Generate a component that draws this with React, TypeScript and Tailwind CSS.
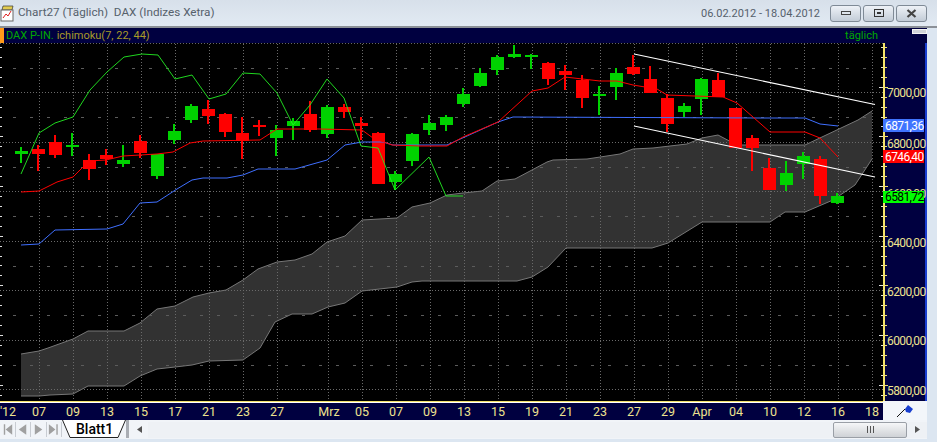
// DAX daily chart window (Ichimoku) as it looks in the charting app

type Candle = [number, number, number, number, number, 'g' | 'r'];

const candles: Candle[] = [
  [21, 147, 151, 154, 163, 'g'], [38, 145, 149, 154, 171, 'r'], [55, 135, 142, 155, 158, 'r'],
  [72, 133, 145, 147, 156, 'g'], [89, 154, 160, 169, 180, 'r'], [106, 149, 155, 159, 165, 'r'],
  [123, 145, 160, 164, 167, 'g'], [140, 135, 141, 153, 158, 'r'], [157, 154, 154, 176, 179, 'g'],
  [174, 124, 131, 140, 144, 'g'], [191, 104, 106, 120, 123, 'g'], [208, 100, 109, 116, 124, 'r'],
  [225, 113, 114, 132, 137, 'r'], [242, 117, 133, 141, 159, 'r'], [259, 120, 125, 127, 136, 'r'],
  [276, 125, 130, 138, 156, 'g'], [293, 118, 121, 126, 140, 'g'], [310, 101, 114, 130, 132, 'r'],
  [327, 105, 107, 134, 138, 'g'], [344, 104, 107, 112, 118, 'r'], [361, 117, 123, 126, 140, 'r'],
  [378, 132, 133, 184, 184, 'r'], [395, 171, 174, 182, 190, 'g'], [412, 133, 134, 161, 166, 'g'],
  [429, 115, 123, 130, 135, 'g'], [446, 115, 117, 125, 131, 'g'], [463, 88, 94, 104, 107, 'g'],
  [480, 68, 73, 86, 87, 'g'], [497, 55, 57, 70, 75, 'g'], [514, 45, 54, 57, 58, 'g'],
  [531, 54, 55, 57, 69, 'g'], [548, 62, 63, 79, 85, 'r'], [565, 65, 71, 75, 90, 'r'],
  [582, 75, 80, 98, 108, 'r'], [599, 86, 94, 96, 115, 'g'], [616, 68, 73, 87, 100, 'g'],
  [633, 55, 67, 74, 75, 'r'], [650, 66, 79, 93, 93, 'r'], [667, 94, 98, 124, 132, 'r'],
  [684, 103, 106, 112, 117, 'g'], [701, 78, 79, 99, 115, 'g'], [718, 73, 80, 97, 97, 'r'],
  [735, 108, 108, 148, 148, 'r'], [752, 135, 138, 148, 171, 'r'], [769, 158, 168, 190, 190, 'r'],
  [786, 161, 173, 185, 191, 'g'], [803, 152, 156, 164, 179, 'g'], [820, 156, 159, 196, 204, 'r'],
  [837, 193, 196, 203, 204, 'g'],
];

const greenLine = '21,174 39,133 55,123 73,117 90,90 107,72 124,57 142,54 158,55 175,79 192,75 209,99 226,94 243,73 260,74 277,93 293,125 310,105 327,79 344,98 361,146 378,148 395,190 429,157 446,196 463,196';
const redLine = '21,192 39,191 57,182 73,177 89,161 106,160 123,156 157,154 173,152 190,143 203,141 260,140 277,129 320,129 362,130 373,138 392,145 420,146 447,146 463,137 498,122 532,91 548,88 565,77 600,81 617,81 633,85 657,89 667,95 723,97 737,103 770,132 805,132 820,138 838,157';
const blueLine = '21,245 39,244 55,230 107,229 123,224 140,203 157,202 177,189 192,180 203,178 227,178 243,175 258,169 295,169 320,162 327,160 345,145 362,142 383,142 393,145 447,145 498,122 513,117 761,118 805,118 820,124 838,126';

const cloudTop = '21,354 39,351 48,348 73,339 88,331 124,331 140,323 157,309 175,306 193,297 209,293 226,290 243,280 258,269 277,262 295,260 312,254 327,242 345,236 362,220 397,218 412,207 430,203 447,195 463,193 482,191 497,181 515,179 547,162 553,160 587,159 620,154 633,149 653,148 687,144 702,138 718,135 737,145 805,145 858,120 872,111';
const cloudBottom = '21,396 39,396 50,395 73,394 88,386 124,386 140,376 157,369 175,367 192,365 209,361 243,360 260,348 275,322 292,314 312,314 328,307 345,303 362,291 397,287 412,282 422,281 517,281 532,277 548,267 566,248 652,248 668,243 702,222 770,222 785,212 805,212 833,200 855,185 872,159';
const cloudPoly = cloudTop + ' ' + cloudBottom.split(' ').reverse().join(' ');

const gridX = [39, 73, 107, 141, 175, 209, 243, 277, 328, 362, 396, 430, 464, 498, 532, 566, 600, 634, 668, 702, 736, 770, 804, 838, 872];
const gridY = [92, 142, 191, 241, 290, 340, 389];
const midY = [68, 117, 167, 216, 266, 315, 365];
const priceLabels: [string, number][] = [['7000,00', 92], ['6800,00', 143], ['6600,00', 193], ['6400,00', 242], ['6200,00', 291], ['6000,00', 340], ['5800,00', 390]];
const xLabels: [string, number][] = [["'12", 8], ['07', 39], ['09', 73], ['13', 107], ['15', 141], ['17', 175], ['21', 209], ['23', 243], ['27', 277], ['Mrz', 329], ['05', 362], ['07', 396], ['09', 430], ['13', 464], ['15', 498], ['19', 532], ['21', 566], ['23', 600], ['27', 634], ['29', 668], ['Apr', 702], ['04', 736], ['10', 770], ['12', 804], ['16', 838], ['18', 872]];

const ticks = Array.from({ length: 36 }, (_, i) => i);

function PriceBadge({ y, h, fill, color, label }: { y: number; h: number; fill: string; color: string; label: string }) {
  return (
    <g>
      <rect x={883} y={y} width={41} height={h} fill={fill} />
      <text x={885} y={y + h - 2} fontSize={12} letterSpacing={-0.6} fill={color}>{label}</text>
    </g>
  );
}

function Chart() {
  return (
    <svg viewBox="0 43 927 358" width={927} height={358} className="block bg-black font-['Roboto',sans-serif]">
      <polygon points={cloudPoly} fill="#323232" />
      <polyline points={cloudTop} fill="none" stroke="#777" />
      <polyline points={cloudBottom} fill="none" stroke="#777" />

      <line x1={0} x2={883} y1={43.5} y2={43.5} stroke="#666" strokeDasharray="1 2" />
      {gridX.map((x) => (
        <line key={x} x1={x + 0.5} x2={x + 0.5} y1={44} y2={400} stroke="#6a6a6a" strokeDasharray="1 2" />
      ))}
      {gridY.map((y) => (
        <line key={y} x1={0} x2={883} y1={y + 0.5} y2={y + 0.5} stroke="#6a6a6a" strokeDasharray="1 2" />
      ))}
      {midY.map((y) => (
        <line key={y} x1={13} x2={875} y1={y + 0.5} y2={y + 0.5} stroke="#5c5c5c" strokeDasharray="3 14" />
      ))}
      {ticks.map((i) => {
        const y = Math.round(47 + i * 9.93);
        const major = (i + 1) % 5 === 0;
        return (
          <g key={i}>
            <rect x={0} y={y} width={major ? 3 : 2} height={1} fill="#ddd" />
            <rect x={major ? 879 : 881} y={y} width={major ? 4 : 2} height={1} fill="#ddd" />
          </g>
        );
      })}

      {candles.map(([c, hi, top, bot, lo, col]) => {
        const fill = col === 'g' ? '#00d200' : '#ff0000';
        return (
          <g key={c} fill={fill} shapeRendering="crispEdges">
            <rect x={c - 1} y={hi} width={2} height={lo - hi} />
            <rect x={c - 6} y={top} width={13} height={Math.max(bot - top, 2)} />
          </g>
        );
      })}

      <polyline points={blueLine} fill="none" stroke="#3f6fff" />
      <polyline points={redLine} fill="none" stroke="#ff0000" />
      <polyline points={greenLine} fill="none" stroke="#22ee22" strokeWidth={0.9} />
      <line x1={634} y1={54} x2={875} y2={104.5} stroke="#fff" strokeWidth={1.2} />
      <line x1={634} y1={126} x2={875} y2={177} stroke="#fff" strokeWidth={1.2} />

      <rect x={883} y={43} width={44} height={358} fill="#000040" />
      <rect x={883} y={43} width={2} height={358} fill="#f4e36a" />
      <rect x={925} y={43} width={2} height={358} fill="#1a3fd0" />
      {ticks.map((i) => {
        const y = Math.round(47 + i * 9.93);
        return <rect key={i} x={885} y={y} width={(i + 1) % 5 === 0 ? 3 : 2} height={1} fill="#f4e36a" />;
      })}
      {priceLabels.map(([label, y]) => (
        <text key={label} x={887} y={y + 5} fontSize={12} letterSpacing={-0.6} fill="#eee38f">{label}</text>
      ))}
      <PriceBadge y={119} h={13} fill="#3f74ff" color="#fff" label="6871,36" />
      <PriceBadge y={150} h={13} fill="#ff0000" color="#fff" label="6746,40" />
      <PriceBadge y={191} h={12} fill="#00ff00" color="#000" label="6581,72" />
    </svg>
  );
}

function XAxis() {
  return (
    <svg viewBox="0 401 883 19" width={883} height={19} className="block bg-[#000040] font-['Roboto',sans-serif]">
      <rect x={0} y={400} width={883} height={2} fill="#f4e36a" />
      <rect x={0} y={402} width={883} height={1} fill="#fff" />
      {xLabels.map(([label, x], i) => (
        <text key={i} x={x} y={416} fontSize={12.5} fill="#eee38f" textAnchor="middle">{label}</text>
      ))}
    </svg>
  );
}

function WinButton({ children }: { children: React.ReactNode }) {
  return (
    <div className="w-[31px] h-[17px] rounded-[3px] border border-[#7f8a96] bg-gradient-to-b from-[#eef2f7] to-[#c3ccd7] flex items-center justify-center">
      {children}
    </div>
  );
}

function NavArrow({ d }: { d: string }) {
  return (
    <svg width={15} height={15} viewBox="0 0 15 15" className="block border-r border-[#c8ccd2]">
      <path d={d} fill="#a0a0a0" />
    </svg>
  );
}

export default function App() {
  return (
    <div className="w-[937px] h-[442px] overflow-hidden bg-[#dce6f1] font-['Roboto',sans-serif]">
      {/* title bar */}
      <div className="h-[28px] flex items-center pr-[10px] bg-gradient-to-b from-[#d7e0ea] to-[#e2eaf3] border-b-2 border-[#8b9097]">
        <svg width={16} height={17} viewBox="0 0 16 17" className="shrink-0">
          <path d="M3 1h10l-1 4H2z" fill="#e2cc50" stroke="#333" strokeWidth={0.7} />
          <rect x={1} y={5} width={12} height={11} fill="#fff" stroke="#666" />
          <path d="M3 13l3-4 2 2 3-5" fill="none" stroke="#e02020" />
        </svg>
        <span className="ml-[2px] text-[11.7px] leading-none text-[#56616c] whitespace-pre">Chart27 (Täglich)  DAX (Indizes Xetra)</span>
        <span className="ml-auto mr-[10px] text-[11px] leading-none text-[#56616c]">06.02.2012 - 18.04.2012</span>
        <div className="flex gap-[2px]">
          <WinButton>
            <div className="w-[10px] h-[4px] bg-[#dfe5ec] border border-[#444]" />
          </WinButton>
          <WinButton>
            <div className="w-[10px] h-[8px] border border-[#333] flex items-center justify-center">
              <div className="w-[4px] h-[2px] bg-[#333]" />
            </div>
          </WinButton>
          <WinButton>
            <svg width={11} height={9} viewBox="0 0 11 9">
              <path d="M1.5 1l8 7M9.5 1l-8 7" stroke="#444" strokeWidth={2.2} />
            </svg>
          </WinButton>
        </div>
      </div>

      <div className="w-[927px]">
        {/* chart heading */}
        <div className="h-[15px] bg-[#000040] flex items-center text-[11px] leading-none">
          <div className="w-[4px] h-[15px] bg-[#ff9a1a] shrink-0" />
          <span className="ml-[2px] text-[#00a800]">DAX P-IN.</span>
          <span className="ml-[3px] text-[#a89a28]">ichimoku(7, 22, 44)</span>
          <span className="ml-auto mr-[34px] text-[#00a800]">täglich</span>
          <div className="w-[15px] h-[5px] mb-[9px] bg-[#d0d4d8] border border-[#f4f4f4]" />
        </div>

        <Chart />

        <div className="flex h-[19px]">
          <XAxis />
          <div className="flex-1 bg-[#f3f6fa] flex items-center justify-center">
            <svg width={18} height={14} viewBox="0 0 18 14">
              <path d="M1 13L9 5" stroke="#111" />
              <path d="M9 5l3-4 5 4-3 4-4-1z" fill="#1a3fd0" />
            </svg>
          </div>
        </div>
      </div>

      {/* sheet tabs */}
      <div className="w-[927px] h-[19px] flex items-center bg-[#f1f4f8]">
        <div className="flex w-[62px] shrink-0 justify-between pl-[1px]">
          <NavArrow d="M3 2h1.5v11H3zM12 2v11L5 7.5z" />
          <NavArrow d="M11 2v11L3 7.5z" />
          <NavArrow d="M3 2v11l8-5.5z" />
          <NavArrow d="M2 2v11l7-5.5zM10 2h1.5v11H10z" />
        </div>
        <svg width={68} height={19} viewBox="0 0 68 19" className="block shrink-0">
          <path d="M0.5 0L8 17.5h48L63.5 0" fill="#fff" stroke="#222" />
          <rect x={64} y={0} width={3} height={18} fill="#a9adb3" />
          <text x={14} y={13.5} fontSize={14} fontWeight={500} fill="#000">Blatt1</text>
        </svg>
        <svg width={14} height={13} viewBox="0 0 14 13" className="ml-[3px] shrink-0">
          <path d="M9 3v7L4 6.5z" fill="#555" />
        </svg>
        <div className="flex-1 h-[16px] ml-[1px] bg-[#eef1f5] flex justify-end items-center pr-[11px]">
          <div className="w-[74px] h-[16px] rounded-[2px] border border-[#9a9fa6] bg-gradient-to-b from-[#f6f7f8] to-[#cfd2d6] flex items-center justify-center gap-[1px]">
            <div className="w-[1px] h-[7px] bg-[#555]" />
            <div className="w-[1px] h-[7px] bg-[#555] ml-[1px]" />
            <div className="w-[1px] h-[7px] bg-[#555] ml-[1px]" />
          </div>
          <svg width={12} height={13} viewBox="0 0 12 13" className="ml-[5px] -mr-[8px] shrink-0">
            <path d="M3 3v7l5-3.5z" fill="#555" />
          </svg>
        </div>
      </div>
    </div>
  );
}
